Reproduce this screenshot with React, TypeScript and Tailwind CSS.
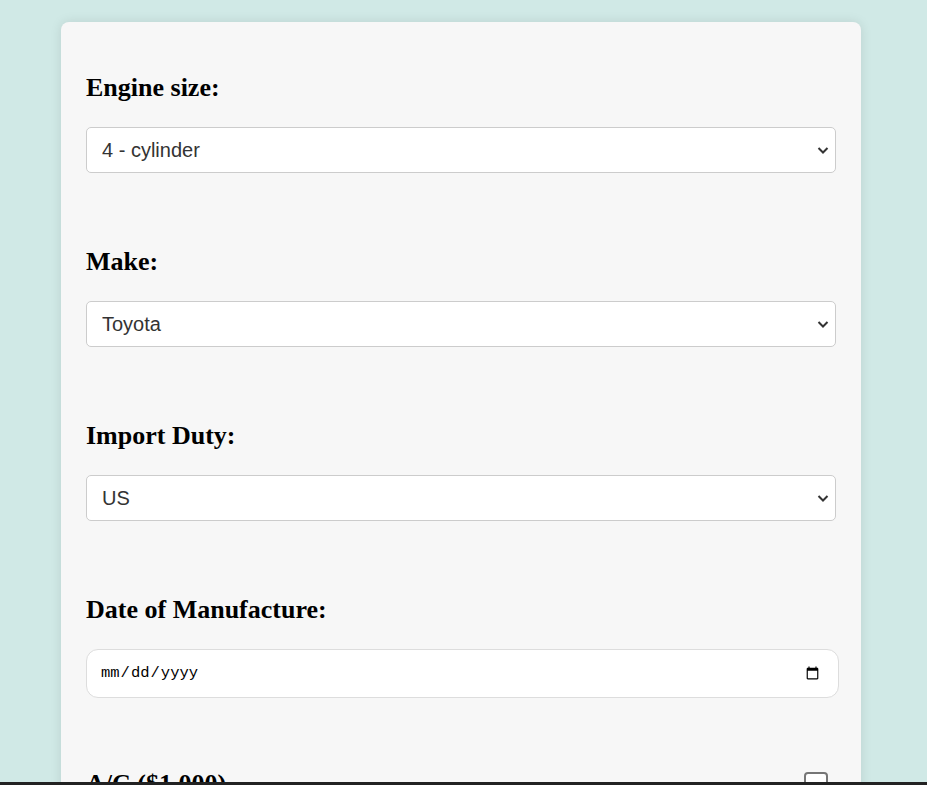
import React from "react";

function Group({ label, children, last }: { label: string; children: React.ReactNode; last?: boolean }) {
  return (
    <div className={last ? "" : "mb-[72px]"}>
      <h2 className="text-[26px] font-bold leading-[33px] text-black mb-[23px] font-['Liberation_Serif',serif]">{label}</h2>
      {children}
    </div>
  );
}

function Select({ value, options }: { value: string; options: string[] }) {
  return (
    <div className="relative w-[750px]">
      <select
        defaultValue={value}
        className="w-full h-[46px] appearance-none bg-white border border-[#cccccc] rounded-[5px] pl-[15px] pr-[30px] text-[20px] text-[#333333] font-['Liberation_Sans',Arial,sans-serif] outline-none"
      >
        {options.map((o) => (
          <option key={o}>{o}</option>
        ))}
      </select>
      <svg className="pointer-events-none absolute right-[7px] top-[17px]" width="12" height="12" viewBox="0 0 12 12">
        <path d="M1.5 4 L6 8.5 L10.5 4" fill="none" stroke="#333" strokeWidth="2" />
      </svg>
    </div>
  );
}

export default function App() {
  return (
    <div className="min-h-screen bg-[#d0e9e6] pt-[22px] pb-[40px]">
      <div className="ml-[61px] w-[800px] bg-[#f7f7f7] rounded-[8px] shadow-[0_0_12px_rgba(0,0,0,0.1)] px-[25px] pt-[49px] pb-[40px]">
        <Group label="Engine size:">
          <Select value="4 - cylinder" options={["4 - cylinder", "6 - cylinder", "8 - cylinder"]} />
        </Group>
        <Group label="Make:">
          <Select value="Toyota" options={["Toyota", "Honda", "Nissan"]} />
        </Group>
        <Group label="Import Duty:">
          <Select value="US" options={["US", "EU", "JP"]} />
        </Group>
        <div className="mb-[69px]">
          <h2 className="text-[26px] font-bold leading-[33px] text-black mb-[23px] font-['Liberation_Serif',serif]">Date of Manufacture:</h2>
          <input
            type="date"
            className="w-[753px] h-[49px] bg-white border border-[#dddddd] rounded-[12px] pl-[13px] pr-[16px] text-[15.5px] text-black font-['Liberation_Mono',monospace] outline-none"
          />
        </div>
        <div className="flex items-start justify-between pr-[8px]">
          <h2 className="text-[26px] font-bold leading-[33px] text-black font-['Liberation_Serif',serif]">A/C ($1,000)</h2>
          <input type="checkbox" className="mt-[5px] w-[24px] h-[24px] appearance-none bg-white border-2 border-[#767676] rounded-[4px]" />
        </div>
        <div className="h-[200px]" />
      </div>
      <div className="fixed bottom-0 left-0 right-0 h-[3px] bg-[#222222]" />
    </div>
  );
}
